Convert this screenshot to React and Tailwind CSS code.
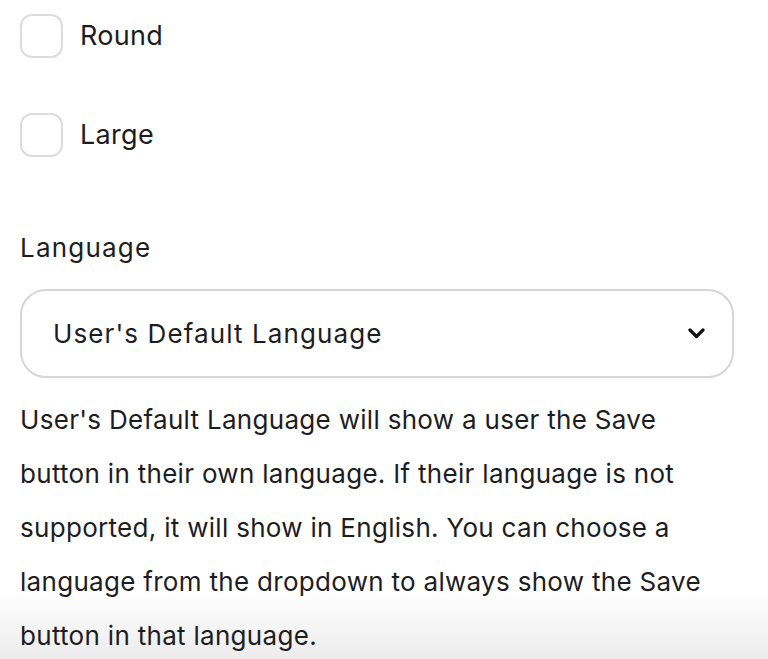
import { useState } from "react";

const Checkbox = ({ label, checked, onChange }) => (
  <label className="flex h-[44px] cursor-pointer items-center gap-[17px]">
    <span
      className={`block h-[44px] w-[43px] rounded-[12px] border-[2.5px] ${
        checked ? "border-[#1d1d1f] bg-[#1d1d1f]" : "border-[#dcdcdc] bg-white"
      }`}
      onClick={onChange}
    />
    <span className="text-[27px] leading-[44px] tracking-[0.3px] text-[#1d1d1f]">{label}</span>
  </label>
);

const App = () => {
  const [round, setRound] = useState(false);
  const [large, setLarge] = useState(false);

  return (
    <div
      className="h-[659px] w-[768px] overflow-hidden bg-[linear-gradient(to_bottom,#ffffff_0px,#ffffff_590px,#ececec_659px)] px-[20px] pt-[14px] text-[#1d1d1f]"
      style={{ fontFamily: "Inter, 'Noto Sans', sans-serif" }}
    >
      <Checkbox label="Round" checked={round} onChange={() => setRound(!round)} />
      <div className="mt-[55px]">
        <Checkbox label="Large" checked={large} onChange={() => setLarge(!large)} />
      </div>

      <div className="mt-[75px] text-[26px] leading-[32px] tracking-[1.2px]">Language</div>

      <div className="mt-[25px] flex h-[89px] w-[714px] items-center justify-between rounded-[26px] border-[2.5px] border-[#d6d6d6] pl-[31px] pr-[27px]">
        <span className="text-[26px] tracking-[1.1px]">User's Default Language</span>
        <svg width="17" height="11" viewBox="0 0 17 11" fill="none">
          <path
            d="M2 2L8.5 8.5L15 2"
            stroke="#111"
            strokeWidth="3.2"
            strokeLinecap="round"
            strokeLinejoin="round"
          />
        </svg>
      </div>

      <p className="mt-[15px] w-[710px] text-[26px] leading-[54px] tracking-[0.3px]">
        User's Default Language will show a user the Save button in their own
        language. If their language is not supported, it will show in English.
        You can choose a language from the dropdown to always show the Save
        button in that language.
      </p>
    </div>
  );
};

export default App;
